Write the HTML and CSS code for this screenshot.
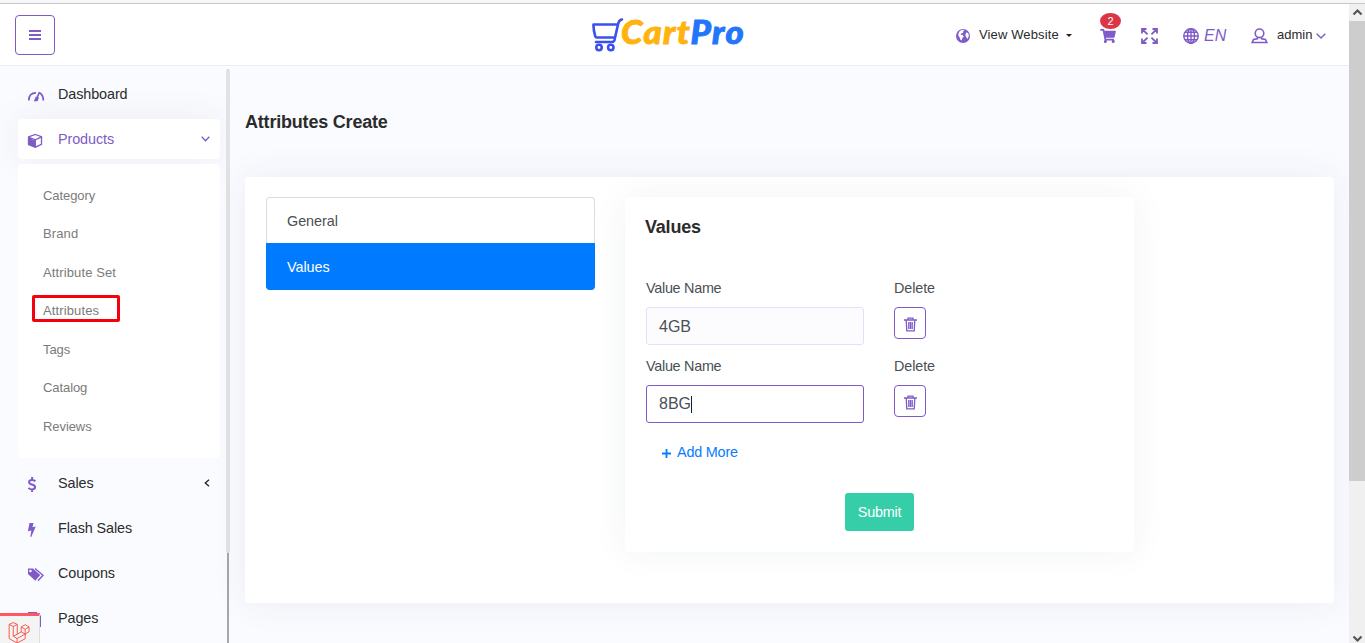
FILE: index.html
```html
<!DOCTYPE html>
<html lang="en">
<head>
<meta charset="utf-8">
<title>Attributes Create</title>
<link rel="stylesheet" href="styles.css">
</head>
<body>
<div class="window-edge"></div>
<div class="viewport">
  <div class="page">
    <header class="header">
      <button class="menu-toggle" aria-label="Menu">
        <svg width="12" height="10" viewBox="0 0 12 10"><path d="M0 1h12M0 5h12M0 9h12" stroke="currentColor" stroke-width="2"/></svg>
      </button>
      <div class="logo">
        <svg width="33" height="34" viewBox="0 0 33 34" fill="none" stroke="#3b50ee" stroke-width="2.600" stroke-linecap="round" stroke-linejoin="round"><path d="M30 1.500c-3 .3-3.300 2-3.900 4.500L22.500 22c-.4 1.500-1 2-2.500 2H4M25 6.500H1.500C1.300 11 2.300 15 3.300 18.500q.3 1 1.500 1H22"/><circle cx="7" cy="29.500" r="2.700"/><circle cx="18.800" cy="29.500" r="2.700"/></svg>
        <span class="logo-text"><span class="logo-cart">Cart</span><span class="logo-pro">Pro</span></span>
      </div>
      <nav class="tools">
        <a class="website">
          <svg class="globe" width="14" height="14" viewBox="0 0 14 14"><circle cx="7" cy="7" r="7" fill="#7e5bc7"/><path d="M4.800 1.300l2.700-.5.800 1-1.500.9.400 1-2 .7-.5 1.500 2 .2 1.100 1.500-1.400 1.500-.7 2.300-1.300-.6-.6-2L2.600 6.900 2.300 5.200 3 3zM10.200 3.500l1.900.500.8 2.500-1.200 3.500-2-2.400-.3-2z" fill="#fff"/></svg>
          <span class="website-label">View Website</span><span class="caret"></span>
        </a>
        <a class="cart">
          <svg width="16" height="14" viewBox="0 0 576 512" fill="currentColor"><path d="M528.12 301.319l47.273-208C578.806 78.301 567.391 64 551.990 64H159.208l-9.166-44.810C147.758 8.021 137.930 0 126.529 0H24C10.745 0 0 10.745 0 24v16c0 13.255 10.745 24 24 24h69.883l70.248 343.435C147.325 417.100 136 435.222 136 456c0 30.928 25.072 56 56 56s56-25.072 56-56c0-15.674-6.447-29.835-16.824-40h209.647C430.447 426.165 424 440.326 424 456c0 30.928 25.072 56 56 56s56-25.072 56-56c0-22.172-12.888-41.332-31.579-50.405l5.517-24.276c3.413-15.018-8.002-29.319-23.403-29.319H218.117l-6.545-32h293.145c11.206 0 20.920-7.754 23.403-18.681z"/></svg>
          <span class="badge">2</span>
        </a>
        <svg class="expand" width="17" height="16" viewBox="0 0 17 16" fill="none" stroke="currentColor" stroke-width="1.800"><path d="M1 5.500V1h4.500M1 1l5.600 5.300M11.500 1H16v4.500M16 1l-5.600 5.300M1 10.500V15h4.500M1 15l5.600-5.300M11.500 15H16v-4.500M16 15l-5.600-5.300"/></svg>
        <a class="language">
          <svg width="16" height="16" viewBox="0 0 16 16" fill="none" stroke="currentColor" stroke-width="1.400"><circle cx="8" cy="8" r="7.200"/><ellipse cx="8" cy="8" rx="3.500" ry="7.200"/><path d="M8 .8v14.400M.8 8h14.400M1.900 4.300h12.200M1.900 11.700h12.200"/></svg>
          <i>EN</i>
        </a>
        <a class="account">
          <svg width="17" height="16" viewBox="0 0 17 16" fill="none" stroke="currentColor" stroke-width="1.600"><circle cx="8.500" cy="5.300" r="4.300"/><path d="M6.300 9.500v1.300L2.500 11.500 1.200 14.500h14.600L14.500 11.500l-3.800-.7V9.500"/></svg>
          <span class="account-name">admin</span>
          <svg class="account-arrow" width="10" height="6" viewBox="0 0 10 6" fill="none" stroke="currentColor" stroke-width="1.400"><path d="M.7.700L5 5 9.300.700"/></svg>
        </a>
      </nav>
    </header>
    <div class="body">
      <aside class="sidebar">
        <a class="nav-item"><svg class="nav-icon" viewBox="0 0 18 18" fill="none" stroke="currentColor" stroke-width="1.700"><path d="M1.800 13.500C1.800 8.500 4.500 5.800 9 5.800M13 6c2.300 1.500 3.300 4 3.300 7.500M9 13.500l3.500-8.500"/><path d="M8 13.500l1.300-3 1.600.7-1 2.300z" fill="currentColor"/></svg>Dashboard</a>
        <a class="nav-item nav-item-open"><svg class="nav-icon" viewBox="0 0 18 18"><path d="M1.500 6l6.800 2.600v6.900L1.500 12.600z" fill="currentColor"/><path d="M8.300 2.500l6.200 2.200v7.700l-6.200 2.800L1.500 12.500V5z M1.500 5.200l6.800 2.600L14.500 4.900M8.300 8v7" fill="none" stroke="currentColor" stroke-width="1.300"/></svg>Products<svg class="nav-arrow" width="9" height="6" viewBox="0 0 9 6" fill="none" stroke="currentColor" stroke-width="1.300"><path d="M.7.700l3.800 4 3.800-4"/></svg></a>
        <div class="submenu">
          <a class="tight">Category</a><a>Brand</a><a>Attribute Set</a><a class="marked">Attributes</a><a class="tight">Tags</a><a class="tight">Catalog</a><a class="tight">Reviews</a>
        </div>
        <a class="nav-item"><svg class="nav-icon" viewBox="0 0 18 18" fill="none" stroke="currentColor" stroke-width="2"><path d="M8.300 5.400C7.600 4.400 6.500 4 5.200 4 3.300 4 2.100 4.900 2.100 6.200c0 3.200 6 1.400 6 4.900 0 1.500-1.300 2.300-3.100 2.300-1.500 0-2.700-.5-3.600-1.500M5.100 1V4M5.100 13.200V16"/></svg>Sales<svg class="nav-arrow" width="6" height="8" viewBox="0 0 6 8" fill="none" stroke="currentColor" stroke-width="1.400"><path d="M5 .700L1.300 4 5 7.300"/></svg></a>
        <a class="nav-item"><svg class="nav-icon" viewBox="0 0 18 18" fill="currentColor"><path d="M2.500 2h4L5.500 6.300l3.300-.8L4.200 16h-.9l1.100-6.500L.9 10.300z"/></svg>Flash Sales</a>
        <a class="nav-item"><svg class="nav-icon" viewBox="0 0 18 18"><path fill-rule="evenodd" d="M1 2.500h5l7.300 6.500-5 5.800L1 8zm2.400 1.200a1.300 1.300 0 1 0 .1 2.600 1.300 1.300 0 0 0-.1-2.600z" fill="currentColor"/><path d="M8 2.500l8 6.700-5 5.500" fill="none" stroke="currentColor" stroke-width="1.400"/></svg>Coupons</a>
        <a class="nav-item"><svg class="nav-icon" viewBox="0 0 18 18"><path d="M1 1h9v13H1zM12.500 4.500h1.500V16h-1.500z" fill="currentColor"/></svg>Pages</a>
      </aside>
      <div class="side-scroll"><div class="side-scroll-thumb"></div></div>
      <main class="content">
        <h1>Attributes Create</h1>
        <section class="panel">
          <div class="tabs"><a>General</a><a class="active">Values</a></div>
          <form class="card">
            <h2>Values</h2>
            <div class="value-row">
              <label class="field">Value Name<span class="input">4GB</span></label>
              <div class="field">Delete<span class="delete"><svg width="13" height="15" viewBox="0 0 13 15" fill="none" stroke="currentColor" stroke-width="1.300"><path d="M0 3h13M4 3V1.100h5V3M2.200 3.500l.6 10.400h7.400l.6-10.400M4.800 5v7M6.500 5v7M8.200 5v7"/></svg></span></div>
            </div>
            <div class="value-row">
              <label class="field">Value Name<span class="input focused">8BG<span class="cursor"></span></span></label>
              <div class="field">Delete<span class="delete"><svg width="13" height="15" viewBox="0 0 13 15" fill="none" stroke="currentColor" stroke-width="1.300"><path d="M0 3h13M4 3V1.100h5V3M2.200 3.500l.6 10.400h7.400l.6-10.400M4.800 5v7M6.500 5v7M8.200 5v7"/></svg></span></div>
            </div>
            <a class="add-more"><svg width="9" height="9" viewBox="0 0 9 9"><path d="M0 4.500h9M4.500 0v9" stroke="currentColor" stroke-width="1.800"/></svg>Add More</a>
            <button class="submit" type="button">Submit</button>
          </form>
        </section>
      </main>
    </div>
  </div>
  <div class="page-scroll">
    <svg width="16" height="17" viewBox="0 0 16 17" fill="none" stroke="#555" stroke-width="2.200"><path d="M4.500 10.500l4-4 4 4"/></svg>
    <div class="page-scroll-thumb"></div>
    <svg class="scroll-down" width="16" height="17" viewBox="0 0 16 17" fill="none" stroke="#555" stroke-width="2.200"><path d="M4.500 10.500l4 4 4-4"/></svg>
  </div>
</div>
<div class="debug-badge">
  <svg width="22" height="22" viewBox="0 0 22 23" fill="none" stroke="#f5544b" stroke-width="1" stroke-linejoin="round"><path d="M.7 2.500L5 .6l4.200 1.900v10.300l4.100-2.400V5.200l4.200-2.400 4 2.400v5l-4 2.400v4.900L9 22 .7 17.300zM.7 2.500L5 4.700l4.200-2.200M5 4.700v10.200l4 2.400 8.500-4.700-4.200-2.200M13.300 5.200l4.200 2.400 4-2.400M17.500 7.600v5M5 14.900l4.200-2.100M9 17.300V22"/></svg>
</div>
</body>
</html>
```
FILE: styles.css
```css
* { box-sizing: border-box; }
body {
  margin: 0;
  height: 643px;
  overflow: hidden;
  background: #fafbff;
  color: #2b2b2b;
  font: 14.4px/20px "Liberation Sans", Arial, sans-serif;
  letter-spacing: -.1px;
}
svg { display: block; flex: none; }
.window-edge { height: 4px; background: #f7f7fa; border-bottom: 1px solid #c8c8cd; }
.viewport { display: flex; height: 639px; }
.page { flex: 1; min-width: 0; overflow: hidden; }

.header {
  display: flex;
  height: 62px;
  padding-left: 15px;
  background: #fff;
  border-bottom: 1px solid #eceef0;
  color: #7e5bc7;
}
.menu-toggle {
  display: flex;
  align-items: center;
  justify-content: center;
  width: 40px;
  height: 40px;
  margin-top: 11px;
  padding: 0;
  border: 1px solid #7e5bc7;
  border-radius: 4px;
  background: #fff;
  color: #7e5bc7;
}
.logo { display: flex; margin-left: 537px; padding-top: 14px; width: 364px; }
.logo-text {
  height: 36px;
  margin: -4px 0 0 -4px;
  font: italic 900 32px/36px Lato, sans-serif;
  letter-spacing: 1.2px;
  transform: scaleX(1.085);
  transform-origin: left;
  -webkit-text-stroke: .9px currentColor;
}
.logo-cart { color: #ffb30f; }
.logo-pro { color: #2376fa; }
.tools { display: flex; height: 62px; align-items: center; letter-spacing: 0; }
.website { display: flex; align-items: center; width: 144px; }
.globe { margin-top: 2px; }
.website-label { margin-left: 9px; color: #2b2b2b; font-size: 13px; letter-spacing: .13px; }
.caret { margin-left: 7px; border: 3px solid transparent; border-top-color: #222; border-bottom: 0; }
.cart { position: relative; width: 41px; padding-top: 2px; }
.badge {
  position: absolute;
  top: -14px;
  left: 0;
  width: 21px;
  height: 16px;
  border-radius: 50%;
  background: #dc3545;
  color: #fff;
  font-size: 11px;
  line-height: 16px;
  text-align: center;
}
.expand { margin: 2px 25px 0 0; }
.language { display: flex; align-items: center; gap: 5px; width: 69px; margin-top: 2px; font-size: 16px; }
.account { display: flex; align-items: center; margin-left: -1px; }
.account svg:first-child { margin-top: 2px; }
.account-name { margin: -1px 4px 0 9px; color: #2b2b2b; font-size: 13px; }
.account-arrow { margin-top: 1px; }

.body { display: flex; height: 577px; }
.sidebar { width: 226px; padding: 8px 6px 0 18px; overflow: hidden; }
.nav-item {
  display: flex;
  align-items: center;
  height: 40px;
  margin-bottom: 5px;
  padding: 0 10px 0 9px;
  border-radius: 4px;
}
.nav-icon { width: 18px; height: 18px; margin: 3px 13px 0 0; color: #7e5bc7; }
.nav-arrow { margin-left: auto; }
.nav-item-open { background: #fff; color: #7e5bc7; box-shadow: 0 0 36px rgba(50, 50, 80, .07); }
.submenu {
  position: relative;
  height: 294px;
  margin-bottom: 5px;
  padding: 18px 14px 0;
  border-radius: 4px;
  background: #fff;
  color: #7b7b7b;
  font-size: 13px;
  letter-spacing: .12px;
}
.submenu a {
  display: flex;
  align-items: center;
  height: 27px;
  margin-bottom: 11.500px;
  padding: 0 11px;
}
.submenu .tight { letter-spacing: -.08px; }
.submenu .marked {
  width: 88px;
  margin: -2.500px 0 14px;
  padding-top: 4px;
  border-radius: 2px;
  box-shadow: inset 0 0 0 3px #f5000d;
}
.side-scroll { width: 4px; margin-top: 3px; background: linear-gradient(90deg, transparent 1px, #a6a6aa 1px 3px, transparent 3px); }
.side-scroll-thumb { height: 484px; border-radius: 2px; background: #e2e2e3; }

.content { flex: 1; padding: 44px 15px 0; }
h1, h2 { margin: 0; font-size: 18px; line-height: 24px; font-weight: 700; letter-spacing: -.2px; }
.panel {
  display: flex;
  gap: 30px;
  height: 426px;
  margin-top: 43px;
  padding: 20px 21px;
  border-radius: 4px;
  background: #fff;
  box-shadow: 0 0 36px rgba(50, 50, 80, .07);
  color: #4a4f54;
}
.tabs { width: 329px; letter-spacing: -.05px; }
.tabs a {
  display: flex;
  align-items: center;
  height: 46px;
  padding: 0 20px;
  border: 1px solid #dcdcde;
  border-bottom: 0;
  border-radius: 4px 4px 0 0;
}
.tabs .active { height: 47px; border-color: #007bff; border-radius: 0 0 4px 4px; background: #007bff; color: #fff; }
.card {
  display: flex;
  flex-direction: column;
  width: 509px;
  height: 355px;
  padding: 18px 20px 0;
  border-radius: 4px;
  box-shadow: 0 0 36px rgba(40, 50, 45, .06);
}
.card h2 { color: #2b2b2b; margin-bottom: 39px; }
.value-row { display: flex; gap: 30px; height: 78px; padding-left: 1px; }
.field { display: flex; flex-direction: column; gap: 9px; }
label.field { letter-spacing: -.28px; }
.input {
  display: flex;
  align-items: center;
  width: 218px;
  height: 38px;
  padding: 1px 0 0 12px;
  border: 1px solid #e3e0fa;
  border-radius: 3px;
  background: #fcfcff;
  color: #495057;
  font-size: 16px;
  letter-spacing: 0;
}
.focused { border-color: #7e5bc7; background: #fff; padding-top: 0; }
.cursor { width: 1px; height: 17px; background: #222; }
.delete {
  display: flex;
  align-items: center;
  justify-content: center;
  width: 32px;
  height: 32px;
  padding-top: 2px;
  border: 1px solid #7e5bc7;
  border-radius: 4px;
  color: #7e5bc7;
}
.add-more { display: flex; align-items: center; gap: 6px; margin: 8px 0 0 17px; color: #087cff; letter-spacing: -.2px; }
.add-more svg { margin-top: 2px; }
.submit {
  align-self: flex-start;
  width: 69px;
  height: 38px;
  margin: 31px 0 0 200px;
  padding: 0;
  border: 0;
  border-radius: 3px;
  background: #36cea8;
  color: #fff;
  font: inherit;
  letter-spacing: -.25px;
}

.page-scroll { display: flex; flex-direction: column; width: 16px; background: #f0f0f0; }
.page-scroll-thumb { height: 460px; background: #cdcdcd; }
.scroll-down { margin-top: auto; }
.debug-badge {
  position: absolute;
  left: 0;
  top: 613px;
  width: 40px;
  height: 30px;
  padding: 6px 0 0 8px;
  overflow: hidden;
  border-top: 3px solid #ff5662;
  border-right: 1px solid #ddd;
  background: #f4f4f4;
}
```
